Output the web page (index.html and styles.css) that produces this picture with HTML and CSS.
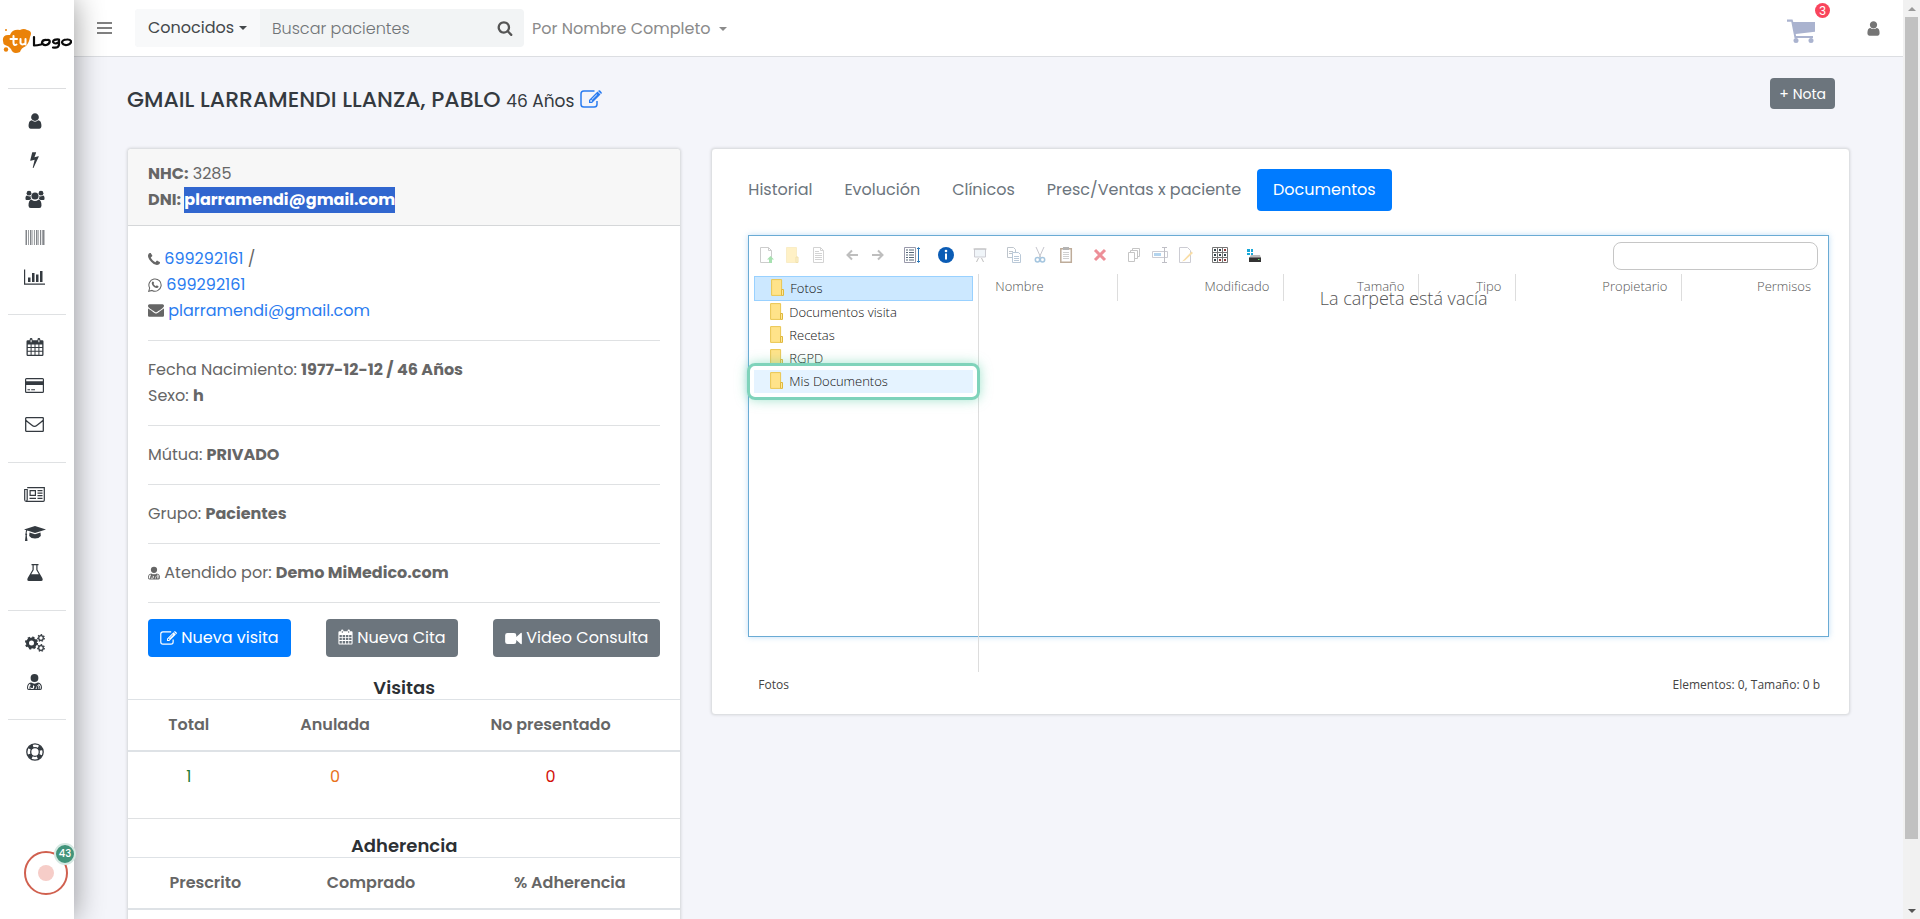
FILE: index.html
```html
<!DOCTYPE html>
<html lang="es">
<head>
<meta charset="utf-8">
<title>Ficha de paciente</title>
<meta name="viewport" content="width=device-width, initial-scale=1">
<link rel="stylesheet" href="styles.css">
</head>
<body>
<svg class="sprite" aria-hidden="true">
  <symbol id="user" viewBox="0 0 1792 1792"><path d="M1536 1399q0 109-62.5 187t-150.5 78h-854q-88 0-150.5-78t-62.5-187q0-85 8.5-160.5t31.5-152 58.5-131 94-89 134.5-34.5q131 128 313 128t313-128q76 0 134.5 34.5t94 89 58.5 131 31.5 152 8.5 160.5zm-256-887q0 159-112.5 271.5t-271.5 112.5-271.5-112.5-112.5-271.5 112.5-271.5 271.5-112.5 271.5 112.5 112.5 271.5z"/></symbol>
  <symbol id="bolt" viewBox="0 0 1792 1792"><path d="M1333 566q18 20 7 44l-540 1157q-13 25-42 25-4 0-14-2-17-5-25.5-19t-4.500-30l197-808-406 101q-4 1-12 1-18 0-31-11-18-15-13-39l201-825q4-14 16-23t28-9h328q19 0 32 12.500t13 29.500q0 8-5 18l-171 463 396-98q8-2 12-2 19 0 34 15z"/></symbol>
  <symbol id="search" viewBox="0 0 1792 1792"><path d="M1216 832q0-185-131.5-316.5t-316.5-131.5-316.5 131.5-131.5 316.5 131.5 316.5 316.5 131.5 316.5-131.5 131.5-316.5zm512 832q0 52-38 90t-90 38q-54 0-90-38l-343-342q-179 124-399 124-143 0-273.5-55.5t-225-150-150-225-55.5-273.5 55.5-273.5 150-225 225-150 273.5-55.5 273.5 55.5 225 150 150 225 55.5 273.5q0 220-124 399l343 343q37 37 37 90z"/></symbol>
  <symbol id="phone" viewBox="192 192 1408 1408"><path d="M1600 1240q0 27-10 70.5t-21 68.5q-21 50-122 106-94 51-186 51-27 0-53-3.5t-57.5-12.5-47-14.5-55.5-20.5-49-18q-98-35-175-83-127-79-264-216t-216-264q-48-77-83-175-3-9-18-49t-20.5-55.5-14.5-47-12.5-57.5-3.5-53q0-92 51-186 56-101 106-122 25-11 68.5-21t70.5-10q14 0 21 3 18 6 53 76 11 19 30 54t35 63.5 31 53.5q3 4 17.5 25t21.5 35.5 7 28.5q0 20-28.5 50t-62 55-62 53-28.5 46q0 9 5 22.5t8.5 20.5 14 24 11.5 19q76 137 174 235t235 174q2 1 19 11.5t24 14 20.5 8.5 22.5 5q18 0 46-28.5t53-62 55-62 50-28.5q14 0 28.5 7t35.5 21.5 25 17.5q25 15 53.5 31t63.5 35 54 30q70 35 76 53 3 7 3 21z"/></symbol>
  <symbol id="envelope" viewBox="0 0 1792 1792"><path d="M1792 710v794q0 66-47 113t-113 47h-1472q-66 0-113-47t-47-113v-794q44 49 101 87 362 246 497 345 57 42 92.500 65.500t94.500 48 110 24.500h2q51 0 110-24.500t94.500-48 92.500-65.500q170-123 498-345 57-39 100-87zm0-294q0 79-49 151t-122 123q-376 261-468 325-10 7-42.500 31t-54 38.500-52 32.500-57.500 27-50 9h-2q-23 0-50-9t-57.500-27-52-32.500-54-38.500-42.500-31q-91-64-262-182.500t-205-142.500q-62-42-117-115.500t-55-136.500q0-78 41.500-130t118.500-52h1472q65 0 112.500 47t47.500 113z"/></symbol>
  <symbol id="users" viewBox="0 0 20 18"><circle cx="4" cy="3.200" r="2.400"/><circle cx="16" cy="3.200" r="2.400"/><path d="M.5 9V7.500Q.7 5.600 2 5.600Q4 7 5.600 6Q5.300 8 6.400 9.200Q5 9.300 4.400 10H1.500Q.5 10 .5 9ZM19.500 9V7.500Q19.300 5.600 18 5.600Q16 7 14.400 6Q14.700 8 13.600 9.200Q15 9.300 15.600 10h2.900Q19.500 10 19.500 9Z"/><circle cx="10" cy="6" r="3.600"/><path d="M3.500 15.500Q3.500 9.800 6.600 9.800Q10 12.400 13.400 9.800Q16.500 9.800 16.500 15.500Q16.500 18 14.300 18H5.700Q3.500 18 3.500 15.500Z"/></symbol>
  <symbol id="barcode" viewBox="0 0 20 15"><path d="M.5 0H2v15H.5zM3 0h.8v15H3zM5 0h1.500v15H5zM7.500 0h.6v15h-.6zM9 0h.8v15H9zM11 0h1.500v15H11zM13.300 0h.6v15h-.6zM15 0h1.200v15H15zM17.300 0h2.200v15h-2.200z"/></symbol>
  <symbol id="chart" viewBox="0 0 21 16"><path d="M0 .5h1.200v14H21v1.200H0zM4 8.500h2.500V13H4zM8 4h2.500v9H8zM12 5.500h2.500V13H12zM16 2h2.500v11H16z"/></symbol>
  <symbol id="calendar" viewBox="0 0 18 18"><path fill-rule="evenodd" d="M1.700 2.200h2V1.500a1.400 1.400 0 0 1 2.800 0v.7h5V1.500a1.400 1.400 0 0 1 2.800 0v.7h2Q17.500 2.200 17.500 3.500v13Q17.500 18 16.300 18H1.700Q.5 18 .5 16.500v-13Q.5 2.200 1.700 2.200ZM1.800 6.500V9h2.800V6.500zM5.600 6.500V9h2.900V6.500zM9.500 6.500V9h2.900V6.500zM13.400 6.500V9h2.800V6.500zM1.800 10v2.700h2.800V10zM5.600 10v2.700h2.900V10zM9.500 10v2.700h2.900V10zM13.400 10v2.700h2.800V10zM1.800 13.700v3h2.800v-3zM5.600 13.700v3h2.900v-3zM9.500 13.700v3h2.900v-3zM13.400 13.700v3h2.800v-3zM4.600 1.700v2.500h1V1.700zM12.400 1.700v2.500h1V1.700z"/></symbol>
  <symbol id="card" viewBox="0 0 19 15"><path fill-rule="evenodd" d="M1.500 0h16Q19 0 19 1.500v12Q19 15 17.500 15h-16Q0 15 0 13.500v-12Q0 0 1.500 0ZM1.200 1.200v2h16.600v-2zM1.200 7v6.800h16.600V7zM2.500 11.300H5v1H2.500zM6.200 11.300H10v1H6.200z"/></symbol>
  <symbol id="envelope-o" viewBox="0 0 19 15"><path d="M1.300.7h16.400q.6 0 .6.600v12.400q0 .6-.6.600H1.300q-.6 0-.6-.6V1.300q0-.6.6-.6ZM.8 3.200Q4 6 7 8.300Q9.500 10.500 12 8.300Q15 6 18.200 3.200" fill="none" stroke="currentColor" stroke-width="1.300"/></symbol>
  <symbol id="news" viewBox="0 0 21 15"><path d="M3.200.7h17.100v12.600q0 1-1 1H2.200q-1.500 0-1.500-1.500V2.500h2.500V12.500q0 1.500-1 1.700" fill="none" stroke="currentColor" stroke-width="1.200"/><path fill-rule="evenodd" d="M5.500 3H12v6H5.500zM6.700 4.200v3.600h4.100V4.200zM13.500 3h5v1.200h-5zM13.500 5.500h5v1.200h-5zM13.500 8h5v1.200h-5zM5.500 10.800H12V12H5.500zM13.500 10.800h5V12h-5z"/></symbol>
  <symbol id="cap" viewBox="0 0 22 16"><path d="M11 0 22 3.500 11 7 3.300 4.600Q2.700 5.600 2.600 7.300Q3.700 8.300 2.800 9.400L3.500 15H1L1.600 9.400Q.8 8.300 1.600 7.300Q1.700 5.300 2.200 4.200L0 3.500ZM5.500 6.600 11 8.300l5.500-1.700.3 3.400Q15 12.500 11 12.500T5.200 10Z"/></symbol>
  <symbol id="flask" viewBox="0 0 16 17"><path fill-rule="evenodd" d="M4.500 0h7v1.200h-1v4.500L15.300 14q1.200 3-1.300 3H2Q-.5 17 .7 14L5.500 5.700V1.200h-1ZM6.700 1.200V6L4.200 10.300h7.600L9.300 6V1.200Z"/></symbol>
  <symbol id="cogs" viewBox="0 0 20 18"><circle cx="6.500" cy="9" r="4" fill="none" stroke="currentColor" stroke-width="3"/><circle cx="6.500" cy="9" r="5.600" fill="none" stroke="currentColor" stroke-width="2" stroke-dasharray="2.200 2.200"/><circle cx="16" cy="4" r="2.300" fill="none" stroke="currentColor" stroke-width="1.300"/><circle cx="16" cy="4" r="3.300" fill="none" stroke="currentColor" stroke-width="1.200" stroke-dasharray="1.500 1.460"/><circle cx="16" cy="14" r="2.300" fill="none" stroke="currentColor" stroke-width="1.300"/><circle cx="16" cy="14" r="3.300" fill="none" stroke="currentColor" stroke-width="1.200" stroke-dasharray="1.500 1.460"/></symbol>
  <symbol id="doctor" viewBox="0 0 15 16"><circle cx="7.500" cy="4" r="3.900"/><path fill-rule="evenodd" d="M4 8.500q3.500 2.300 7 0 4 .5 4 5.500 0 2-1.800 2H1.800Q0 16 0 14 0 9 4 8.500ZM3.200 9.700Q1 10.500 1 14q0 1 1 1h.5v-1.800q0-1.200 1-1.500ZM11.400 9.700v1.500q1.800.3 1.800 2V15q.8 0 .8-1 0-3.500-2.600-4.300ZM6 11v2.500q-1 1.500-2 0v-1l-.5 1V15h3L7.500 12.500ZM9.500 12.500 8.500 15h1.200v-2q0-1 .9-1t.9 1v2h.8v-2q0-1.700-1.700-1.700Z"/></symbol>
  <symbol id="ring" viewBox="0 0 18 18"><circle cx="9" cy="9" r="8.200" fill="none" stroke="currentColor" stroke-width="1.300"/><circle cx="9" cy="9" r="4.300" fill="none" stroke="currentColor" stroke-width="1.300"/><circle cx="9" cy="9" r="6.300" fill="none" stroke="currentColor" stroke-width="3.600" stroke-dasharray="4.400 5.500" stroke-dashoffset="-2.750"/></symbol>
  <symbol id="edit" viewBox="0 0 22 18"><path d="M17 11v3.200q0 2.800-2.800 2.800H3.800Q1 17 1 14.200V3.800Q1 1 3.800 1H14.500" fill="none" stroke="currentColor" stroke-width="1.500"/><path fill-rule="evenodd" d="m17.500 1.500 3 3L12 13H9V10ZM10.300 10.500v1.200h1.200l.8-.8-1.200-1.200ZM16.700 4.300l-5 5 .4.400 5-5ZM18.300.7q.9-1 1.800-.1l1.300 1.300q.9.900 0 1.800l-.3.300-3.100-3.100Z"/></symbol>
  <symbol id="video" viewBox="0 0 18 14"><path d="M2.500 1h7Q12 1 12 3.500v2L16.800 1Q18 .5 18 1.700v10.600q0 1.200-1.200.7L12 8.500v2Q12 13 9.500 13h-7Q0 13 0 10.500v-7Q0 1 2.500 1Z"/></symbol>
  <symbol id="whatsapp" viewBox="0 0 16 16"><path d="M.8 15.200 1.900 11.500A7 7 0 1 1 4.600 14.200Z" fill="none" stroke="currentColor" stroke-width="1.200"/><path d="M5.200 4q.9-.4 1.300.5l.5 1.300-.7 1.100q1 1.800 2.700 2.500l1-1 1.900.9q.3.200.1.900-.7 1.500-2.300 1.300Q5.500 10.700 4.300 6.700 4.100 4.800 5.200 4Z"/></symbol>
  <symbol id="cart" viewBox="0 0 28 24"><path d="M0 .5h5.500L6.300 3H28v9.700L8.700 15l.4 2H26v2H7.500L4.300 2.700H0Z"/><circle cx="9" cy="21.500" r="2.500"/><circle cx="24" cy="21.500" r="2.500"/></symbol>
  <symbol id="folder" viewBox="0 0 13 17"><path d="M.6.600h10v15.800H.6z" fill="#ffe38a" stroke="#eac651"/><path d="M10.500 10.500h2v5.900h-2z" fill="#ffe99c" stroke="#e0b83c"/></symbol>
</svg>

<aside class="sidebar">
  <a class="logo" href="#" aria-label="tu Logo">
    <svg viewBox="0 0 70 26" width="70" height="26"><path d="M1 13Q0 6 8 7Q10 1 18 2Q22 0 25 2Q31 3 28 9Q27 15 24 18Q19 20 18 24Q11 27 9 21Q7 18 3 17Q1 16 1 13Z" fill="#ea8209"/><circle cx="4" cy="21.500" r="2.200" fill="#ea8209"/><circle cx="4" cy="2" r="1" fill="#ea8209"/><path d="M11.500 8v7q.5 3 3 1.500M8.500 11h6.500M18.500 11v4q1.500 3 5 0v-4 5.500" fill="none" stroke="#fff" stroke-width="2" stroke-linecap="round" stroke-linejoin="round"/><path d="M32 9v8.500q3 0 7-1M45 12q-4.500-.5-5 2.500.5 3 4.500 2.500 4-1.500 3-4.500-1-1-2.500-.5M57 11.500q-6-.5-6 2.500 2 3 6 0v-2.500 5.500q-1 3.500-6 2.500M65 11.500q-5 .2-5 3 1 3 5 2.500 4.500-1 4-4-1-1.700-4-1.500" fill="none" stroke="#0b0b0b" stroke-width="2.200" stroke-linecap="round" stroke-linejoin="round"/></svg>
  </a>
  <nav class="side-nav" aria-label="Principal">
    <a href="#" aria-label="Pacientes"><svg width="18" height="18"><use href="#user"/></svg></a>
    <a href="#" aria-label="Accesos"><svg width="17" height="17"><use href="#bolt"/></svg></a>
    <a href="#" aria-label="Grupos"><svg width="20" height="18"><use href="#users"/></svg></a>
    <a class="muted" href="#" aria-label="Productos"><svg width="20" height="15"><use href="#barcode"/></svg></a>
    <a href="#" aria-label="Informes"><svg width="21" height="16"><use href="#chart"/></svg></a>
    <hr>
    <a href="#" aria-label="Agenda"><svg width="18" height="18"><use href="#calendar"/></svg></a>
    <a href="#" aria-label="Pagos"><svg width="19" height="15"><use href="#card"/></svg></a>
    <a href="#" aria-label="Correo"><svg width="19" height="15"><use href="#envelope-o"/></svg></a>
    <hr>
    <a href="#" aria-label="Noticias"><svg width="21" height="15"><use href="#news"/></svg></a>
    <a href="#" aria-label="Formación"><svg width="22" height="16"><use href="#cap"/></svg></a>
    <a href="#" aria-label="Laboratorio"><svg width="16" height="17"><use href="#flask"/></svg></a>
    <hr>
    <a href="#" aria-label="Ajustes"><svg width="20" height="18"><use href="#cogs"/></svg></a>
    <a href="#" aria-label="Médicos"><svg width="15" height="16"><use href="#doctor"/></svg></a>
    <hr>
    <a href="#" aria-label="Ayuda"><svg width="18" height="18"><use href="#ring"/></svg></a>
  </nav>
  <button class="recorder" type="button" aria-label="Grabar"><span class="recorder-dot"></span><span class="recorder-count">43</span></button>
</aside>

<div class="page">
  <header class="topbar">
    <button class="burger" type="button" aria-label="Menú"><span></span><span></span><span></span></button>
    <form class="search-group">
      <button class="scope caret" type="button">Conocidos</button>
      <input class="search-input" type="text" placeholder="Buscar pacientes" aria-label="Buscar pacientes">
      <button class="search-go" type="button" aria-label="Buscar"><svg width="16" height="16"><use href="#search"/></svg></button>
    </form>
    <button class="mode caret" type="button">Por Nombre Completo</button>
    <div class="topbar-right">
      <a class="cart" href="#" aria-label="Carrito"><svg width="28" height="24"><use href="#cart"/></svg><span class="cart-count">3</span></a>
      <a class="account" href="#" aria-label="Cuenta"><svg width="17" height="17"><use href="#user"/></svg></a>
    </div>
  </header>

  <main class="content">
    <div class="title-row">
      <h1>GMAIL LARRAMENDI LLANZA, PABLO <small>46 Años</small> <a href="#" aria-label="Editar"><svg width="22" height="18"><use href="#edit"/></svg></a></h1>
      <button class="btn btn-gray btn-sm" type="button">+ Nota</button>
    </div>

    <div class="columns">
      <section class="card">
        <div class="card-head">
          <div><b>NHC:</b> 3285</div>
          <div><b>DNI: <mark>plarramendi@gmail.com</mark></b></div>
        </div>
        <div class="card-body">
          <div><svg width="12" height="13"><use href="#phone"/></svg> <a href="#">699292161</a> /</div>
          <div><svg width="14" height="14"><use href="#whatsapp"/></svg> <a href="#">699292161</a></div>
          <div><svg width="16" height="16"><use href="#envelope"/></svg> <a href="#">plarramendi@gmail.com</a></div>
          <hr>
          <div>Fecha Nacimiento: <b>1977-12-12 / 46 Años</b></div>
          <div>Sexo: <b>h</b></div>
          <hr>
          <div>Mútua: <b>PRIVADO</b></div>
          <hr>
          <div>Grupo: <b>Pacientes</b></div>
          <hr>
          <div><svg width="12" height="14"><use href="#doctor"/></svg> Atendido por: <b>Demo MiMedico.com</b></div>
          <hr>
          <div class="actions">
            <button class="btn btn-blue" type="button"><svg width="17" height="14"><use href="#edit"/></svg> Nueva visita</button>
            <button class="btn btn-gray" type="button"><svg width="15" height="16"><use href="#calendar"/></svg> Nueva Cita</button>
            <button class="btn btn-gray" type="button"><svg width="17" height="13"><use href="#video"/></svg> Video Consulta</button>
          </div>
        </div>
        <h2>Visitas</h2>
        <table class="stats visits">
          <colgroup><col class="v1"><col class="v2"><col></colgroup>
          <thead><tr><th>Total</th><th>Anulada</th><th>No presentado</th></tr></thead>
          <tbody><tr><td class="ok">1</td><td class="warn">0</td><td class="bad">0</td></tr></tbody>
        </table>
        <hr>
        <h2>Adherencia</h2>
        <table class="stats adherence">
          <colgroup><col class="a1"><col class="a2"><col></colgroup>
          <thead><tr><th>Prescrito</th><th>Comprado</th><th>% Adherencia</th></tr></thead>
        </table>
      </section>

      <section class="card docs">
        <nav class="tabs" aria-label="Secciones">
          <a href="#">Historial</a><a href="#">Evolución</a><a href="#">Clínicos</a><a href="#">Presc/Ventas x paciente</a><a class="active" href="#">Documentos</a>
        </nav>
        <div class="files">
          <div class="toolbar">
            <div class="tools">
              <button class="off" type="button" aria-label="Subir"><svg viewBox="0 0 16 16"><path d="M2.500.5h8l3 3v12h-11zM10.500.5v3h3" fill="#fff" stroke="#888"/><path d="M12.500 9 16 12.500h-2V16h-3v-3.500H9z" fill="#30b845"/></svg></button>
              <button class="off" type="button" aria-label="Nueva carpeta"><svg viewBox="0 0 16 16"><path d="M2.500.5h10v15h-10z" fill="#ffe07a" stroke="#f2d57c"/><path d="M12 10h2v5.500h-2z" fill="#fde58f" stroke="#e0b83c"/></svg></button>
              <button class="off" type="button" aria-label="Nuevo archivo"><svg viewBox="0 0 16 16"><path d="M3.500.5h7l3 3v12h-10zM10.500.5v3h3M5 4.500h4M5 6.500h7M5 8.500h7M5 10.500h7M5 12.500h7" fill="#fff" stroke="#999"/></svg></button>
            </div>
            <div class="tools">
              <button class="off" type="button" aria-label="Atrás"><svg viewBox="0 0 16 16"><path d="M14 8H3.500M8 3.500 3.500 8 8 12.500" fill="none" stroke="#666" stroke-width="2"/></svg></button>
              <button class="off" type="button" aria-label="Adelante"><svg viewBox="0 0 16 16"><path d="M2 8h10.500M8 3.500 12.500 8 8 12.500" fill="none" stroke="#666" stroke-width="2"/></svg></button>
            </div>
            <div class="tools"><button type="button" aria-label="Seleccionar"><svg viewBox="0 0 16 16"><path d="M.5.5h11v15H.5z" fill="#fff" stroke="#99a"/><path d="M2 3h2M5 3h5M2 5.500h2M5 5.500h5M2 8h2M5 8h5M2 10.500h2M5 10.500h5M2 13h2M5 13h5" stroke="#567"/><path d="M14.500 1v14M13 2l1.500-1.500L16 2M13 14l1.500 1.500L16 14" fill="none" stroke="#2a78b8"/></svg></button></div>
            <div class="tools"><button type="button" aria-label="Información"><svg viewBox="0 0 16 16"><circle cx="8" cy="8" r="8" fill="#0b5cb5"/><circle cx="8" cy="4" r="1.300" fill="#fff"/><path d="M8 6.500v6" stroke="#fff" stroke-width="2"/></svg></button></div>
            <div class="tools"><button class="off" type="button" aria-label="Vista previa"><svg viewBox="0 0 16 16"><path d="M2.500 2h11v8h-11z" fill="#dde9f3" stroke="#889"/><path d="M1.500 2h13M4.500 15l2-4M11.500 15l-2-4" stroke="#666" fill="none"/></svg></button></div>
            <div class="tools">
              <button class="off" type="button" aria-label="Copiar"><svg viewBox="0 0 16 16"><path d="M1.500.5h6l2 2v8h-8zM3 4.500h4M3 6.500h4" fill="#fff" stroke="#678"/><path d="M6.500 5.500h6l2 2v8h-8zM8 9.500h5M8 11.500h5M8 13.500h5" fill="#fff" stroke="#5d7fa3"/></svg></button>
              <button class="off" type="button" aria-label="Cortar"><svg viewBox="0 0 16 16"><path d="m4 0 5 11M12 0 7 11" stroke="#778" fill="none"/><circle cx="5.500" cy="12.700" r="2.200" fill="none" stroke="#2b78b5" stroke-width="1.500"/><circle cx="10.500" cy="12.700" r="2.200" fill="none" stroke="#2b78b5" stroke-width="1.500"/></svg></button>
              <button class="half" type="button" aria-label="Pegar"><svg viewBox="0 0 16 16"><path d="M2.800 1.800h10.500v13.500H2.800z" fill="#fff" stroke="#8a6a48" stroke-width="1.500"/><path d="M5 0h6v3H5z" fill="#777"/><path d="M5 5.500h6M5 7.500h6M5 9.500h6M5 11.500h6" stroke="#aaa"/></svg></button>
            </div>
            <div class="tools"><button class="half" type="button" aria-label="Eliminar"><svg viewBox="0 0 16 16"><path d="m3 3 10 10M13 3 3 13" stroke="#e03545" stroke-width="3"/></svg></button></div>
            <div class="tools">
              <button class="off" type="button" aria-label="Duplicar"><svg viewBox="0 0 16 16"><path d="M6.500 1.500h7v8h-7z" fill="#fff" stroke="#777"/><path d="M4.500 3.500h7v8h-7z" fill="#fff" stroke="#777"/><path d="M2.500 5.500h6v9h-6z" fill="#fff" stroke="#777"/></svg></button>
              <button class="off" type="button" aria-label="Renombrar"><svg viewBox="0 0 16 16"><path d="M.5 4.500h15v6H.5z" fill="#fff" stroke="#889"/><path d="M2 6h7v3H2z" fill="#4c9bd8"/><path d="M10 .5h5M10 15.500h5M12.500 1v14" stroke="#667"/></svg></button>
              <button class="off" type="button" aria-label="Editar archivo"><svg viewBox="0 0 16 16"><path d="M1.500.5h8l3 3v12h-11z" fill="#fff" stroke="#889"/><path d="m5 13.500 8.500-9 1.500 1.500-8 7.500-3 1z" fill="#f1b12d"/></svg></button>
            </div>
            <div class="tools"><button type="button" aria-label="Vista"><svg viewBox="0 0 16 16"><path d="M.5.5h15v15H.5zM5.500.5v15M10.500.5v15M.5 5.500h15M.5 10.500h15" fill="#fff" stroke="#777"/><path d="M2 2h2v2H2zM7 2h2v2H7zM2 7h2v2H2zM7 7h2v2H7zM2 12h2v2H2zM12 7h2v2h-2z" fill="#38464b"/><path d="M12 2h2v2h-2zM12 12h2v2h-2zM7 12h2v2H7z" fill="#8a3a3a"/></svg></button></div>
            <div class="tools"><button type="button" aria-label="Volúmenes"><svg viewBox="0 0 16 16"><path d="M1 2h3v3H1zM5 2h2v3H5zM1 6h3v2H1zM5 6h2v2H5z" fill="#18a8d8"/><path d="m5 8h9l1 3H3z" fill="#bbb"/><path d="M3 10.500h12V15H3z" fill="#333"/><path d="M12 12.500h1.500" stroke="#6d6"/></svg></button></div>
            <input class="file-search" type="text" aria-label="Buscar archivos">
          </div>
          <div class="work">
            <ul class="tree">
              <li class="selected"><svg width="13" height="17"><use href="#folder"/></svg>Fotos</li>
              <li><svg width="13" height="17"><use href="#folder"/></svg>Documentos visita</li>
              <li><svg width="13" height="17"><use href="#folder"/></svg>Recetas</li>
              <li><svg width="13" height="17"><use href="#folder"/></svg>RGPD</li>
              <li class="hover"><svg width="13" height="17"><use href="#folder"/></svg>Mis Documentos</li>
            </ul>
            <div class="listing">
              <table>
                <colgroup><col class="c1"><col class="c2"><col class="c3"><col class="c4"><col class="c2"><col></colgroup>
                <thead><tr><th>Nombre</th><th>Modificado</th><th>Tamaño</th><th>Tipo</th><th>Propietario</th><th>Permisos</th></tr></thead>
              </table>
              <p class="empty">La carpeta está vacía</p>
            </div>
          </div>
        </div>
        <div class="statusbar"><span>Fotos</span><span>Elementos: 0, Tamaño: 0 b</span></div>
      </section>
    </div>
  </main>
</div>
<div class="scrollbar" aria-hidden="true"><i class="up"></i><i class="thumb"></i><i class="down"></i></div>
</body>
</html>
```

FILE: styles.css
```css
* { box-sizing: border-box; }
body {
  margin: 0;
  height: 100vh;
  display: flex;
  overflow: hidden;
  background: #f4f5fa;
  color: #666;
  font: 400 16px/26px Poppins, Inter, "Open Sans", sans-serif;
}
button, input { font: inherit; color: inherit; border: 0; background: none; padding: 0; }
a { color: #2a7cf0; text-decoration: none; }
b { font-weight: 700; }
svg { fill: currentColor; }
hr { border: 0; border-top: 1px solid #dfe1e3; margin: 16px 0; }
.sprite { position: absolute; width: 0; height: 0; }

/* Sidebar */
.sidebar {
  flex: 0 0 74px;
  display: flex;
  flex-direction: column;
  padding: 28px 0 24px;
  background: #fff;
  box-shadow: 0 0 30px rgba(0, 0, 0, .42);
  z-index: 2;
}
.logo { height: 60px; padding-left: 2px; line-height: 0; }
.side-nav { margin: 0 8px; padding-top: 12px; border-top: 1px solid #dcdddf; }
.side-nav a { display: flex; align-items: center; justify-content: center; height: 39px; padding-right: 5px; color: #343a40; }
.side-nav .muted { color: #83868a; }
.side-nav hr { margin: 18px 0 12px; }
.recorder { position: relative; width: 44px; height: 44px; margin: auto 6px 0 auto; border: 2px solid #d0604f; border-radius: 50%; display: grid; place-items: center; }
.recorder-dot { width: 16px; height: 16px; border-radius: 50%; background: #f6cdc8; }
.recorder-count {
  position: absolute; top: -10px; right: -10px;
  width: 22px; height: 22px; border: 2px solid #d5e8e2; border-radius: 50%;
  background: #41947a; color: #fff; font-size: 10px; font-weight: 500; line-height: 18px; text-align: center;
}

/* Top bar */
.page { flex: 1; min-width: 0; }
.topbar { display: flex; align-items: center; height: 57px; padding: 0 21px 0 23px; background: #fff; border-bottom: 1px solid #dcdee2; }
.burger { display: grid; gap: 3px; width: 15px; margin-right: 23px; }
.burger span { height: 2px; background: #808080; }
.search-group { display: flex; height: 38px; margin: 0; border-radius: 4px; overflow: hidden; background: #f2f4f5; }
.scope { width: 125px; background: #f8f9fa; color: #44484b; }
.caret::after { content: ""; display: inline-block; margin-left: 5px; vertical-align: 3px; border: 4px solid transparent; border-top-color: currentColor; border-bottom: 0; }
.search-input { width: 226px; padding: 2px 12px 0; font-weight: 300; outline: 0; }
.search-input::placeholder { color: #6f7375; opacity: 1; }
.search-go { width: 38px; color: #555; line-height: 0; }
.mode { margin-left: 8px; padding-top: 2px; color: #8b8b8b; }
.mode::after { margin-left: 8px; }
.topbar-right { display: flex; align-items: center; gap: 50px; margin-left: auto; }
.cart { position: relative; padding-top: 6px; color: #aab3cf; line-height: 0; }
.cart-count { position: absolute; top: -10px; right: -15px; width: 15px; height: 15px; border-radius: 50%; background: #f9455c; color: #fff; font-size: 12px; line-height: 15px; text-align: center; }
.account { color: #757575; line-height: 0; }

/* Page content */
.content { padding: 21px 53px 0; }
.title-row { display: flex; justify-content: space-between; align-items: flex-start; height: 70px; padding-right: 15px; }
h1 { margin: 0; padding-top: 7px; color: #343a40; font-size: 22px; line-height: 30px; font-weight: 500; }
h1 small { font-size: 17px; font-weight: 400; }
h1 svg { vertical-align: -1px; }
.btn { height: 38px; padding: 0 12px; border-radius: 4px; color: #fff; font-weight: 400; white-space: nowrap; }
.btn svg { vertical-align: -2px; }
.btn-blue { background: #007bff; }
.btn-gray { background: #6c757d; }
.btn-sm { height: 31px; padding: 0 9px; font-size: 14px; }
.columns { display: grid; grid-template-columns: calc(33.333% - 20px) minmax(0, 1fr); gap: 30px; align-items: start; }
.card { background: #fff; border: 1px solid #dee0e3; border-radius: 4px; box-shadow: 0 0 3px rgba(0, 0, 0, .14); }
.card-head { padding: 12px 20px; background: #f7f7f7; border-bottom: 1px solid #d5d7d9; border-radius: 4px 4px 0 0; }
mark { display: inline-block; background: #3166cf; color: #fff; }
.card-body { padding: 20px; }
.card-body div > svg { vertical-align: -2px; }
.actions { display: flex; justify-content: space-between; }

h2 { margin: 0; color: #2c3034; font-size: 18px; line-height: 22px; font-weight: 600; text-align: center; }
.stats { width: 100%; table-layout: fixed; border-collapse: separate; border-spacing: 0; text-align: center; }
.stats th { padding: 12px; border-top: 1px solid #dee2e6; border-bottom: 2px solid #dee2e6; font-weight: 600; }
.stats td { padding: 12px; }
.adherence { margin-bottom: 50px; }
.v1 { width: 22%; }
.v2 { width: 31%; }
.a1 { width: 28%; }
.a2 { width: 32%; }
.ok { color: #1f7a33; }
.warn { color: #e8731e; }
.bad { color: #d3120b; }

/* Documents */
.docs { padding: 20px 18px 16px 20px; }
.tabs { display: flex; }
.tabs a { padding: 8px 16px; color: #6c757d; border-radius: 4px; }
.tabs .active { background: #007bff; color: #fff; }
.files, .statusbar { margin: 0 2px 0 16px; font: 300 13px/18px "Open Sans", "Noto Sans", sans-serif; color: #333; }
.files { height: 402px; margin-top: 24px; border: 1px solid #6aabd4; box-shadow: 0 0 6px rgba(102, 175, 233, .4); }
.toolbar { display: flex; align-items: center; gap: 8px; height: 38px; padding: 0 10px 1px 4px; }
.tools { display: flex; }
.tools button { width: 26px; height: 26px; line-height: 0; }
.tools svg { width: 16px; height: 16px; }
.tools .off { opacity: .42; }
.tools .half { opacity: .55; }
.file-search { width: 205px; height: 28px; margin: 2px 0 0 auto; padding: 0 8px; border: 1px solid #c6c6c6; border-radius: 8px; }
.work { display: flex; height: 398px; }
.tree { flex: 0 0 230px; margin: 0; padding: 2px 5px; list-style: none; border-right: 1px solid #ddd; color: #111; }
.tree li { position: relative; display: flex; align-items: center; gap: 6px; height: 23px; padding: 0 0 2px 16px; }
.tree .selected { height: 25px; background: #cce8ff; border: 1px solid #99d1ff; }
.tree .hover { background: #e5f3ff; }
.tree .hover::after {
  content: ""; position: absolute; inset: -7px; border: 3px solid #7fd3ba; border-radius: 8px;
  box-shadow: 0 0 12px rgba(90, 205, 165, .55), inset 0 0 0 3px #fff;
}
.listing { position: relative; flex: 1; min-width: 0; }
.listing table { width: 100%; table-layout: fixed; border-spacing: 0; }
.listing th { height: 27px; padding: 0 14px 3px; border-right: 1px solid #ddd; color: #555; font-weight: 300; text-align: right; }
.listing th:first-child { padding-left: 16px; text-align: left; }
.listing th:last-child { border-right: 0; padding-right: 17px; }
.c1 { width: 139px; }
.c2 { width: 166px; }
.c3 { width: 135px; }
.c4 { width: 97px; }
.empty { position: absolute; top: 12px; left: 0; right: 0; margin: 0; font-size: 18px; line-height: 24px; text-align: center; color: #555; }
.statusbar { display: flex; justify-content: space-between; padding: 39px 9px 4px 10px; font-size: 12px; font-weight: 400; color: #444; }

/* Window scrollbar */
.scrollbar { flex: 0 0 17px; display: flex; flex-direction: column; align-items: center; background: #f1f1f1; }
.scrollbar i { width: 0; border: 4px solid transparent; }
.scrollbar .up { margin: 3px 0 6px; border-bottom-color: #999; }
.scrollbar .thumb { width: 13px; height: 822px; border: 0; background: #c1c1c1; }
.scrollbar .down { margin: auto 0 2px; border-top-color: #555; }
```
